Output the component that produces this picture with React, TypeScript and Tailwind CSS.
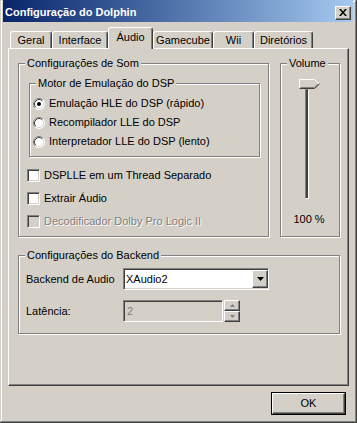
import React from "react";

const FONT = { fontFamily: '"Liberation Sans", Arial, sans-serif' };

const etched = "border border-[#808080] shadow-[1px_1px_0_#fff,inset_1px_1px_0_#fff]";
const sunken =
  "border border-[#808080] border-r-white border-b-white shadow-[inset_1px_1px_0_#404040,inset_-1px_-1px_0_#d4d0c8]";
const raised =
  "border border-white border-r-[#404040] border-b-[#404040] shadow-[inset_-1px_-1px_0_#808080]";

function Group({
  label,
  className,
  children,
}: {
  label: string;
  className: string;
  children?: React.ReactNode;
}) {
  return (
    <div className={`relative ${etched} ${className}`}>
      <span className="absolute top-[-7px] left-[6px] px-[2px] bg-[#d4d0c8] leading-[13px] whitespace-nowrap">
        {label}
      </span>
      {children}
    </div>
  );
}

function Radio({ checked }: { checked?: boolean }) {
  return (
    <svg width="12" height="12" viewBox="0 0 12 12" className="shrink-0">
      <circle cx="6" cy="6" r="5.5" fill="#fff" />
      <path d="M2.11 9.89 A5.5 5.5 0 0 1 9.89 2.11" stroke="#808080" fill="none" />
      <path d="M9.89 2.11 A5.5 5.5 0 0 1 2.11 9.89" stroke="#fff" fill="none" />
      <path d="M2.82 9.18 A4.5 4.5 0 0 1 9.18 2.82" stroke="#404040" fill="none" />
      <path d="M9.18 2.82 A4.5 4.5 0 0 1 2.82 9.18" stroke="#d4d0c8" fill="none" />
      {checked && <circle cx="6" cy="6" r="2" fill="#000" />}
    </svg>
  );
}

function Check({ disabled }: { disabled?: boolean }) {
  return (
    <div
      className={`w-[13px] h-[13px] shrink-0 ${sunken} ${disabled ? "bg-[#d4d0c8]" : "bg-white"}`}
    />
  );
}

function Tab({ label, w, selected }: { label: string; w: string; selected?: boolean }) {
  return (
    <div
      className={`${w} flex items-center justify-center border-l border-t border-white border-r border-r-[#404040] rounded-t-[3px] shadow-[inset_-1px_0_0_#808080] bg-[#d4d0c8] ${
        selected ? "h-[22px] mb-[-1px] relative z-10 pb-[3px]" : "h-[17px]"
      }`}
    >
      {label}
    </div>
  );
}

export default function App() {
  return (
    <div
      style={FONT}
      className="w-[357px] h-[423px] bg-[#d4d0c8] text-[11px] text-black leading-[13px] flex flex-col pl-[3px] pr-[4px] shadow-[inset_-1px_-1px_0_#404040,inset_1px_1px_0_#d4d0c8,inset_-2px_-2px_0_#808080,inset_2px_2px_0_#fff]"
    >
      {/* Title bar */}
      <div className="h-[22px] pt-[3px] flex items-center justify-between bg-gradient-to-r from-[#0a246a] to-[#a6caf0]">
        <span className="pl-[2px] text-white font-bold text-[11px]">Configuração do Dolphin</span>
        <div className={`w-[16px] h-[14px] mr-[2px] flex items-center justify-center bg-[#d4d0c8] ${raised}`}>
          <svg width="8" height="7" viewBox="0 0 8 7">
            <path d="M0 0h2l2 2.5L6 0h2L5 3.5 8 7H6L4 4.5 2 7H0l3-3.5z" fill="#000" />
          </svg>
        </div>
      </div>

      <div className="pl-[5px] pr-[4px] pt-[5px]">
        {/* Tabs */}
        <div className="flex items-end h-[21px] pl-[2px]">
          <Tab label="Geral" w="w-[42px]" />
          <Tab label="Interface" w="w-[56px]" />
          <Tab label="Áudio" w="w-[45px]" selected />
          <Tab label="Gamecube" w="w-[60px]" />
          <Tab label="Wii" w="w-[41px]" />
          <Tab label="Diretórios" w="w-[59px]" />
        </div>

        {/* Panel */}
        <div className="w-[341px] h-[338px] border border-white border-r-[#404040] border-b-[#404040] shadow-[inset_-1px_-1px_0_#808080] pt-[14px] pl-[9px]">
          <div className="flex gap-[11px]">
            <Group label="Configurações de Som" className="w-[251px] h-[174px]">
              <div className="ml-[10px] mt-[19px]">
                <Group label="Motor de Emulação do DSP" className="w-[231px] h-[74px]">
                  <div className="pl-[3px] pt-[10px] flex flex-col">
                    <div className="h-[19px] flex items-center gap-[4px]">
                      <Radio checked />
                      <span>Emulação HLE do DSP (rápido)</span>
                    </div>
                    <div className="h-[19px] flex items-center gap-[4px]">
                      <Radio />
                      <span>Recompilador LLE do DSP</span>
                    </div>
                    <div className="h-[19px] flex items-center gap-[4px]">
                      <Radio />
                      <span>Interpretador LLE do DSP (lento)</span>
                    </div>
                  </div>
                </Group>
              </div>
              <div className="ml-[8px] mt-[7px] flex flex-col">
                <div className="h-[23px] flex items-center gap-[4px]">
                  <Check />
                  <span>DSPLLE em um Thread Separado</span>
                </div>
                <div className="h-[23px] flex items-center gap-[4px]">
                  <Check />
                  <span>Extrair Áudio</span>
                </div>
                <div className="h-[23px] flex items-center gap-[4px]">
                  <Check disabled />
                  <span className="text-[#808080] [text-shadow:1px_1px_0_#fff]">
                    Decodificador Dolby Pro Logic II
                  </span>
                </div>
              </div>
            </Group>

            <Group label="Volume" className="w-[60px] h-[174px]">
              <div className="flex flex-col">
                <svg width="22" height="10" viewBox="0 0 22 10" className="ml-[18px] mt-[15px]">
                  <polygon points="0.5,0.5 15.5,0.5 20.5,5 15.5,9.5 0.5,9.5" fill="#d4d0c8" />
                  <polyline points="0.5,9.5 0.5,0.5 15.5,0.5 20,4.6" stroke="#fff" fill="none" />
                  <polyline points="1.5,8.5 15.2,8.5 19.2,5" stroke="#808080" fill="none" />
                  <polyline points="0.5,9.5 15.5,9.5 20.6,5" stroke="#404040" fill="none" />
                </svg>
                <div className={`ml-[24px] w-[4px] h-[110px] ${sunken} shadow-none border-l-[#808080] bg-[#404040]`} />
                <div className="mt-[14px] text-center pr-[2px]">100 %</div>
              </div>
            </Group>
          </div>

          <Group label="Configurações do Backend" className="w-[322px] h-[79px] mt-[18px]">
            <div className="mt-[12px] pl-[7px] flex flex-col gap-[10px]">
              <div className="h-[22px] flex items-center">
                <span className="w-[97px]">Backend de Audio</span>
                <div className={`w-[146px] h-[22px] bg-white flex items-center justify-between ${sunken}`}>
                  <span className="pl-[2px]">XAudio2</span>
                  <div className={`w-[16px] h-[18px] bg-[#d4d0c8] flex items-center justify-center ${raised}`}>
                    <svg width="7" height="4" viewBox="0 0 7 4">
                      <polygon points="0,0 7,0 3.5,4" fill="#000" />
                    </svg>
                  </div>
                </div>
              </div>
              <div className="h-[22px] flex items-center">
                <span className="w-[97px]">Latência:</span>
                <div className={`w-[100px] h-[22px] bg-[#d4d0c8] flex items-center ${sunken}`}>
                  <span className="pl-[3px] text-[#808080]">2</span>
                </div>
                <div className="ml-[1px] w-[16px] h-[22px] flex flex-col">
                  <div className={`h-[11px] bg-[#d4d0c8] flex items-center justify-center ${raised}`}>
                    <svg width="5" height="3" viewBox="0 0 5 3">
                      <polygon points="2.5,0 5,3 0,3" fill="#808080" />
                    </svg>
                  </div>
                  <div className={`h-[11px] bg-[#d4d0c8] flex items-center justify-center ${raised}`}>
                    <svg width="5" height="3" viewBox="0 0 5 3">
                      <polygon points="0,0 5,0 2.5,3" fill="#808080" />
                    </svg>
                  </div>
                </div>
              </div>
            </div>
          </Group>
        </div>

        {/* Buttons */}
        <div className="flex justify-end pt-[6px] pr-[3px]">
          <div className="w-[75px] h-[23px] border border-black">
            <div className={`w-full h-full flex items-center justify-center ${raised}`}>OK</div>
          </div>
        </div>
      </div>
    </div>
  );
}
